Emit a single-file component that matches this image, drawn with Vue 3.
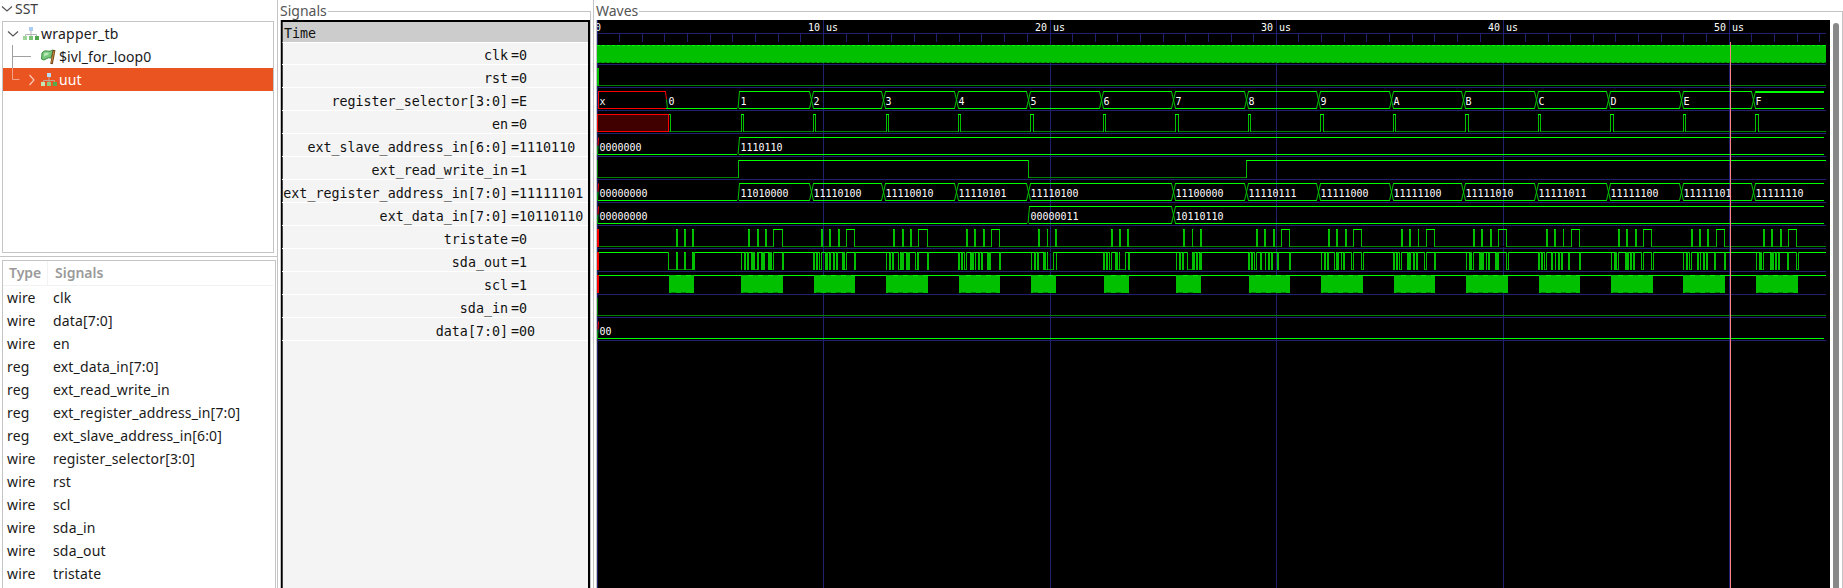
<script setup>
const signals = [
  ['wire', 'clk'], ['wire', 'data[7:0]'], ['wire', 'en'], ['reg', 'ext_data_in[7:0]'],
  ['reg', 'ext_read_write_in'], ['reg', 'ext_register_address_in[7:0]'],
  ['reg', 'ext_slave_address_in[6:0]'], ['wire', 'register_selector[3:0]'], ['wire', 'rst'],
  ['wire', 'scl'], ['wire', 'sda_in'], ['wire', 'sda_out'], ['wire', 'tristate'],
]
const traces = [
  ['clk', '0'], ['rst', '0'], ['register_selector[3:0]', 'E'], ['en', '0'],
  ['ext_slave_address_in[6:0]', '1110110'], ['ext_read_write_in', '1'],
  ['ext_register_address_in[7:0]', '11111101'], ['ext_data_in[7:0]', '10110110'],
  ['tristate', '0'], ['sda_out', '1'], ['scl', '1'], ['sda_in', '0'], ['data[7:0]', '00'],
]

const X0 = 597
const END = 1826
const BUS_END = 1824
const HI = '#00ff00', MID = '#00c000', LO = '#008000', RED = '#ff0000', GRID = '#202070'
const top = (r) => 45 + 23 * r
const low = (r) => 62 + 23 * r

const rects = []
const lines = []
const labels = []
const box = (x, y, w, h, c) => rects.push({ x, y, w, h, c })
const hline = (x1, x2, y, c) => box(x1, y, x2 - x1, 1, c)
const seg = (x1, y1, x2, y2, c = MID) => lines.push({ x1: x1 + 0.5, y1: y1 + 0.5, x2: x2 + 0.5, y2: y2 + 0.5, c })
const bar = (r, x, w) => {
  box(x, top(r), w, 18, MID)
  box(x, top(r), 1, 1, HI)
}

// time grid
hline(X0, END, 33, GRID)
const major = [597, 823, 1050, 1276, 1503, 1729]
for (let n = 0; n <= 54; n++) {
  const x = n % 10 === 0 ? major[n / 10] : Math.floor(X0 + n * 22.644)
  box(x, 33, 1, 9, GRID)
}
major.forEach((x, i) => {
  box(x, 20, 1, 568, GRID)
  labels.push(i ? { x: x - 15, y: 31, t: i * 10 + ' us' } : { x: x - 2, y: 31, t: '0' })
})
for (let r = 0; r < 13; r++) hline(X0, END, 64 + 23 * r, GRID)

// clk
box(X0, top(0), END - X0, 18, MID)

// rst
hline(X0, END, low(1), LO)
box(X0, top(1), 2, 18, MID)

// buses
const change = [666, 738, 811, 883, 956, 1028, 1101, 1173, 1246, 1318, 1391, 1463, 1536, 1608, 1681, 1753]
function bus(r, items) {
  items.forEach(([x, t, zero], i) => {
    const end = i + 1 < items.length ? items[i + 1][0] - 1 : BUS_END
    const prevZero = i > 0 && items[i - 1][2]
    const start = i === 0 ? X0 + 1 : x + (prevZero ? 1 : 2)
    hline(start, end, low(r), HI)
    if (!zero) hline(start, end, top(r), HI)
    if (i > 0) {
      if (prevZero) seg(x - 0.5, low(r), x + 1, top(r))
      else if (items[i - 1][1] !== 'x') {
        seg(x - 2, top(r), x + 2, low(r))
        seg(x - 2, low(r), x + 2, top(r))
      }
    }
    labels.push({ x: x + 2.4, y: top(r) + 14, t })
  })
}
function busStart(r) {
  seg(597, low(r), 597.5, low(r) - 9)
  seg(597.5, low(r) - 9, 598, top(r), RED)
}
const sel = '0123456789ABCDEF'
bus(2, change.map((x, i) => [x, sel[i], i === 0]))
labels.push({ x: 599.4, y: top(2) + 14, t: 'x' })
hline(598, 666, top(2), RED)
hline(598, 666, low(2), RED)
box(598, top(2), 1, 18, RED)
seg(665, top(2), 666, top(2) + 8, RED)
seg(666, top(2) + 8, 667, low(2))
box(666, low(2), 4, 1, HI)
box(1755, top(2), 69, 2, HI)

bus(4, [[597, '0000000', true], [738, '1110110']])
const regs = ['11010000', '11110100', '11110010', '11110101', '11110100', null, '11100000', '11110111',
  '11111000', '11111100', '11111010', '11111011', '11111100', '11111101', '11111110']
bus(6, [[597, '00000000', true], ...regs.map((t, i) => [change[i + 1], t]).filter((e) => e[1])])
bus(7, [[597, '00000000', true], [1028, '00000011'], [1173, '10110110']])
bus(12, [[597, '00', true]])
;[4, 6, 7, 12].forEach(busStart)

// pulses that rise from a low line
function pulse(r, a, b) {
  box(a, low(r), b - a, 1, '#000')
  box(a, top(r), 1, 18, MID)
  box(b, top(r), 1, 18, MID)
  hline(a, b + 1, top(r), HI)
}
hline(X0, END, low(3), LO)
box(X0, top(3), 72, 18, '#400000')
hline(X0, 669, top(3), RED)
hline(X0, 669, low(3), RED)
box(X0, top(3), 1, 18, RED)
box(668, top(3), 1, 18, RED)
box(669, top(3), 2, 1, HI)
box(670, top(3), 1, 18, MID)
;[[741, 743], [813, 815], [886, 888], [958, 960], [1030, 1033], [1103, 1105], [1175, 1178], [1248, 1250],
  [1320, 1323], [1393, 1395], [1465, 1468], [1538, 1540], [1610, 1613], [1683, 1685], [1755, 1758],
].forEach(([a, b]) => pulse(3, a, b))

// ext_read_write_in
box(X0, top(5), 1, 18, LO)
hline(X0, 738, low(5), LO)
hline(738, 1029, top(5), HI)
box(738, top(5), 1, 18, MID)
box(1028, top(5), 1, 18, MID)
hline(1029, 1246, low(5), LO)
box(1246, top(5), 1, 18, MID)
hline(1246, END, top(5), HI)

// tristate
hline(X0, END, low(8), LO)
;[[676, 2], [684, 2], [692, 2], [748, 2], [757, 2], [765, 2], [821, 2], [829, 2], [838, 2], [893, 2], [902, 2],
  [910, 2], [966, 2], [974, 2], [983, 2], [1038, 2], [1047, 1], [1055, 2], [1111, 2], [1119, 2], [1127, 2],
  [1183, 2], [1192, 1], [1200, 2], [1256, 2], [1264, 2], [1273, 2], [1328, 2], [1336, 2], [1345, 2], [1401, 2],
  [1409, 2], [1418, 1], [1473, 2], [1481, 2], [1490, 2], [1546, 2], [1554, 2], [1563, 1], [1618, 2], [1626, 2],
  [1635, 2], [1691, 2], [1699, 2], [1707, 2], [1763, 2], [1771, 2], [1780, 2],
].forEach(([x, w]) => bar(8, x, w))
;[[773, 782], [846, 854], [918, 927], [991, 999], [1281, 1289], [1353, 1361], [1426, 1434], [1498, 1506],
  [1571, 1579], [1643, 1651], [1716, 1724], [1788, 1796]].forEach(([a, b]) => pulse(8, a, b))

// sda_out
hline(X0, END, top(9), HI)
;[[668, 692], [754, 757], [771, 773], [819, 821], [844, 846], [898, 900], [915, 917], [964, 966], [1045, 1053],
  [1109, 1111], [1117, 1125], [1187, 1192], [1254, 1256], [1334, 1336], [1351, 1353], [1361, 1363], [1399, 1401],
  [1424, 1426], [1471, 1473], [1506, 1508], [1544, 1546], [1616, 1618], [1641, 1643], [1651, 1653], [1689, 1691],
  [1761, 1763], [1796, 1798],
].forEach(([a, b]) => {
  box(a, top(9), b - a, 1, '#000')
  box(a, top(9), 1, 18, MID)
  box(b, top(9), 1, 18, MID)
  hline(a + 1, b, low(9), LO)
})
;[[676, 2], [684, 2], [692, 3], [741, 1], [744, 2], [747, 2], [751, 3], [757, 2], [761, 4], [768, 3], [782, 2],
  [813, 2], [816, 2], [825, 3], [829, 2], [833, 2], [836, 2], [842, 3], [854, 2], [886, 1], [889, 2], [892, 2],
  [900, 4], [906, 4], [917, 2], [927, 2], [958, 2], [961, 2], [970, 4], [975, 1], [978, 2], [981, 2], [987, 4],
  [999, 2], [1031, 1], [1034, 2], [1037, 2], [1043, 3], [1047, 1], [1056, 1], [1103, 2], [1106, 2], [1115, 3],
  [1119, 1], [1128, 2], [1176, 1], [1179, 2], [1182, 2], [1192, 3], [1196, 2], [1199, 3], [1248, 2], [1251, 2],
  [1260, 2], [1265, 1], [1268, 2], [1271, 2], [1277, 2], [1289, 2], [1321, 1], [1324, 2], [1327, 2], [1336, 3],
  [1341, 1], [1343, 2], [1393, 2], [1396, 2], [1407, 2], [1409, 2], [1413, 2], [1416, 2], [1434, 2], [1466, 1],
  [1469, 3], [1479, 5], [1486, 1], [1488, 2], [1495, 4], [1538, 2], [1541, 2], [1551, 2], [1555, 1], [1558, 2],
  [1561, 2], [1568, 2], [1579, 2], [1611, 1], [1614, 3], [1625, 4], [1630, 2], [1633, 2], [1683, 1], [1686, 2],
  [1697, 2], [1700, 1], [1703, 2], [1706, 2], [1714, 2], [1724, 2], [1756, 1], [1759, 3], [1770, 4], [1775, 2],
  [1778, 2], [1787, 2],
].forEach(([x, w]) => bar(9, x, w))

// scl bursts
hline(X0, END, top(10), HI)
const bursts = [[669, 694], [741, 783], [814, 855], [886, 928], [959, 1000], [1031, 1056], [1104, 1129],
  [1176, 1201], [1249, 1290], [1321, 1363], [1394, 1435], [1466, 1508], [1539, 1580], [1611, 1653],
  [1683, 1725], [1756, 1798]]
bursts.forEach(([a, b]) => {
  box(a, top(10), b - a, 18, MID)
  for (let x = a + 2; x < b - 4; x += 10) {
    box(x + 5, top(10), Math.min(5, b - x - 5), 1, HI)
    box(x, low(10), 5, 1, LO)
  }
})
;[8, 9, 10].forEach((r) => box(X0, top(r), 2, 18, RED))

// sda_in
hline(X0, END, low(11), LO)
box(X0, top(11), 1, 18, LO)
</script>

<template>
  <div class="app">
    <aside class="left">
      <div class="sst-title">
        <svg width="12" height="8" viewBox="0 0 12 8"><path d="M1 1.5 L6 6 L11 1.5" /></svg>
        <span>SST</span>
      </div>
      <div class="tree">
        <div class="node root">
          <svg class="chev" width="12" height="8" viewBox="0 0 12 8"><path d="M1 1.5 L6 6 L11 1.5" /></svg>
          <svg class="ico" width="16" height="14" viewBox="0 0 16 14">
            <path d="M8 4V8M2.5 9V7.5H13.5V9M8 7V9" stroke="#b4b4b4" fill="none" />
            <rect x="6" y="0" width="4" height="4" fill="#a9cdf3" />
            <rect x="0" y="9" width="4" height="4" fill="#9fd79a" />
            <rect x="6" y="9" width="4" height="4" fill="#7cc576" />
            <rect x="12" y="9" width="4" height="4" fill="#4ea84b" />
          </svg>
          <span>wrapper_tb</span>
        </div>
        <div class="node leaf">
          <svg class="branch" width="20" height="23" viewBox="0 0 20 23"><path d="M.5 0V23M.5 11.5H19" /></svg>
          <svg class="ico" width="15" height="16" viewBox="0 0 15 16">
            <path d="M1 4Q3 1 6 2T12 1L10 9Q7 8 5 10T.5 10Z" fill="#79c77c" stroke="#3c8e44" />
            <path d="M3 4.5Q5 3 8 4L7 6Q5 6 3 7.500Z" fill="#b8e8b5" />
            <path d="M13.200 1L10.500 15" stroke="#6b4215" stroke-width="2.600" />
            <path d="M13 2L10.500 14" stroke="#c68a3c" stroke-width="1.100" />
          </svg>
          <span>$ivl_for_loop0</span>
        </div>
        <div class="node selected">
          <svg class="branch" width="8" height="23" viewBox="0 0 8 23"><path d="M.5 0V11.500H7.500" /></svg>
          <svg class="chev side" width="8" height="12" viewBox="0 0 8 12"><path d="M1.500 1L6 6L1.500 11" /></svg>
          <svg class="ico" width="16" height="14" viewBox="0 0 16 14">
            <path d="M8 4V8M2.500 9V7.500H13.500V9M8 7V9" stroke="#c9a08c" fill="none" />
            <rect x="6" y="0" width="4" height="4" fill="#b9dbfb" />
            <rect x="0" y="9" width="4" height="4" fill="#c4e6b4" />
            <rect x="6" y="9" width="4" height="4" fill="#8ecb80" />
            <rect x="12" y="9" width="4" height="4" fill="#55aa4b" />
          </svg>
          <span>uut</span>
        </div>
      </div>
      <div class="list">
        <div class="lhead"><b class="c1">Type</b><b class="c2">Signals</b></div>
        <div v-for="s in signals" :key="s[1]" class="lrow">
          <span class="c1">{{ s[0] }}</span><span class="c2">{{ s[1] }}</span>
        </div>
      </div>
    </aside>

    <section class="mid">
      <div class="legend"><span>Signals</span><i></i></div>
      <div class="sigs">
        <div class="sbox">
          <div class="time">Time</div>
          <div v-for="t in traces" :key="t[0]" class="srow">
            <span class="name">{{ t[0] }}</span><span class="val">={{ t[1] }}</span>
          </div>
        </div>
      </div>
    </section>

    <section class="right">
      <div class="legend"><span>Waves</span><i></i></div>
      <div class="canvas">
        <svg class="waves" width="1233" height="568" viewBox="597 20 1233 568">
          <g shape-rendering="crispEdges">
            <rect v-for="(r, i) in rects" :key="i" :x="r.x" :y="r.y" :width="r.w" :height="r.h" :fill="r.c" />
            <path d="M597 45.500H1826" stroke="#00ff00" stroke-dasharray="3 2" />
            <path d="M599 62.500H1826" stroke="#008000" stroke-dasharray="3 2" />
          </g>
          <line v-for="(l, i) in lines" :key="i" :x1="l.x1" :y1="l.y1" :x2="l.x2" :y2="l.y2" :stroke="l.c" />
          <text v-for="(l, i) in labels" :key="i" :x="l.x" :y="l.y" :textLength="l.t.length * 6" lengthAdjust="spacingAndGlyphs">{{ l.t }}</text>
          <rect x="1730" y="42" width="1" height="546" fill="#ff8080" shape-rendering="crispEdges" />
        </svg>
        <div class="scroll"></div>
      </div>
    </section>
  </div>
</template>

<style>
body { margin: 0; background: #fff; overflow: hidden; }
</style>

<style scoped>
* { box-sizing: border-box; }
.app {
  display: flex;
  width: 1843px;
  height: 588px;
  overflow: hidden;
  background: #fff;
  color: #1a1a1a;
  font: 14px/23px "Noto Sans", "Open Sans", sans-serif;
  white-space: pre;
}
svg { display: block; flex: none; }
.left { width: 278px; flex: none; border-right: 1px solid #c4c4c4; display: flex; flex-direction: column; }
.sst-title { height: 21px; display: flex; align-items: center; padding: 0 0 3px 1px; gap: 2px; color: #3d3d3d; line-height: 18px; }
.sst-title svg path, .chev path { fill: none; stroke: #555; stroke-width: 1.2; }
.tree { margin-left: 2px; width: 272px; height: 232px; border: 1px solid #c4c4c4; flex: none; }
.node { display: flex; align-items: center; height: 23px; }
.node span { letter-spacing: .1px; }
.root { padding-left: 4px; }
.root .ico { margin: 0 2px 0 4px; }
.root span { letter-spacing: .25px; }
.leaf { padding-left: 9px; }
.leaf .ico { margin: 0 3px 0 9px; }
.branch path { fill: none; stroke: #a0a0a0; }
.selected { background: #e95420; color: #fff; padding-left: 9px; }
.selected .branch path { stroke: #f3a389; }
.selected .chev { margin: 0 5px 0 8px; }
.selected .chev path { stroke: #f9cbbb; }
.selected .ico { margin-right: 2px; }
.list { margin-top: 3px; padding: 3px 0 0 2px; border-top: 1px solid #c4c4c4; flex: 1; display: flex; flex-direction: column; position: relative; }
.list::before { content: ""; position: absolute; left: 2px; top: 3px; width: 272px; height: 400px; border: 1px solid #c4c4c4; }
.lhead, .lrow { display: flex; flex: none; height: 23px; padding-left: 5px; }
.lhead { height: 26px; line-height: 26px; width: 271px; color: #9a9a9a; border-bottom: 1px solid #f2f2f2; }
.lhead b { font-weight: 600; }
.lhead .c1 { padding-left: 2px; width: 41px; border-right: 1px solid #f2f2f2; }
.lhead .c2 { padding-left: 7px; }
.lrow { letter-spacing: .16px; }
.lrow .c1 { width: 46px; }
.mid { width: 316px; flex: none; border-right: 1px solid #c4c4c4; padding-left: 2px; display: flex; flex-direction: column; }
.legend { height: 20px; flex: none; display: flex; color: #555; line-height: 21px; }
.legend i { flex: 1; margin-top: 11px; border-top: 1px solid #c4c4c4; border-right: 1px solid #c4c4c4; }
.mid .legend { width: 311px; }
.mid .legend i { margin-left: 1px; }
.sigs { width: 311px; height: 568px; border: solid #c4c4c4; border-width: 0 1px; }
.sbox { height: 568px; background: #f4f4f4; border: 1px solid #000; border-width: 2px 2px 0 1px; box-shadow: inset 1px 0 #444; font: 13.33px/20px "DejaVu Sans Mono", monospace; color: #111; }
.time { height: 21px; background: #ccc; border-bottom: 1px solid #fff; border-left: 1px solid #444; padding-left: 1px; line-height: 24px; }
.srow { height: 23px; border-bottom: 1px solid #fff; display: flex; padding-top: 4px; }
.time + .srow { height: 22px; padding-top: 3px; }
.name { width: 226px; display: flex; justify-content: flex-end; }
.val { padding-left: 3px; }
.right { flex: 1; padding-left: 2px; display: flex; flex-direction: column; }
.right .legend i { margin-left: 1px; }
.canvas { display: flex; flex: 1; border: solid #c4c4c4; border-width: 0 1px; }
.waves { background: #000; }
.waves text { font: 11px "DejaVu Sans Mono", monospace; fill: #fff; }
.scroll { width: 6px; margin: 3px 0 0 3px; border-radius: 3px 3px 0 0; background: #888; }
</style>
